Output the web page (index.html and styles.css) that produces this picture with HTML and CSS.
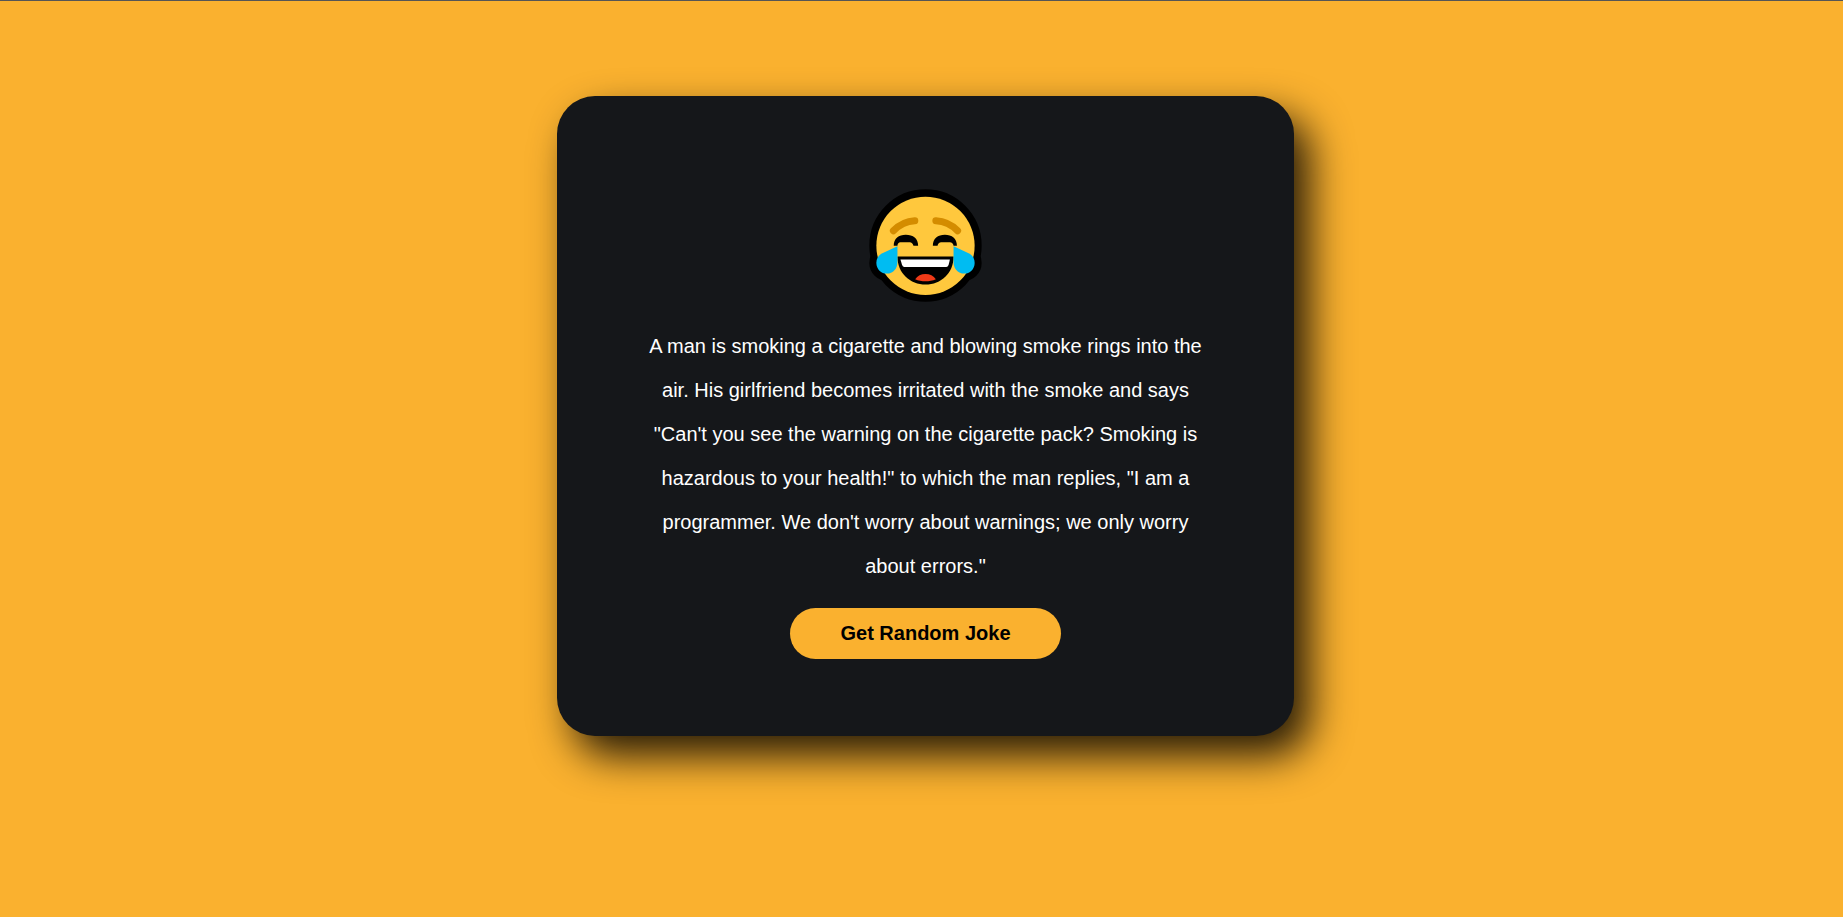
FILE: index.html
```html
<!DOCTYPE html>
<html lang="en">
<head>
<meta charset="utf-8">
<meta name="viewport" content="width=device-width, initial-scale=1">
<title>Random Joke Generator</title>
<link rel="stylesheet" href="styles.css">
</head>
<body>
<main class="card">
  <svg class="emoji" viewBox="26 28 338 338" role="img" aria-label="Face with tears of joy">
    <g fill="#000" stroke="#000" stroke-width="42" stroke-linejoin="round">
      <circle cx="195" cy="197" r="147"/>
      <path d="M111 199L66 220C54 226 48 236 48 249C48 268 63 281 79 281C98 281 111 266 111 246Z"/>
      <path d="M279 199L324 220C336 226 342 236 342 249C342 268 327 281 311 281C292 281 279 266 279 246Z"/>
    </g>
    <circle cx="195" cy="198" r="147" fill="#ffc83d"/>
    <g fill="none" stroke="#d48c00" stroke-width="21" stroke-linecap="round">
      <path d="M99 153Q126 125 163 123"/>
      <path d="M291 153Q264 125 226 123"/>
    </g>
    <path d="M100 198C100 176 115 165 136 165C158 165 173 176 173 198H159Q156 187 148 187H120Q112 187 111 198Z"/>
    <path d="M217 198C217 176 232 165 253 165C274 165 289 176 289 198H279Q277 187 268 187H242Q233 187 231 198Z"/>
    <path d="M111 230H279C279 280 241 314 195 314C149 314 111 280 111 230Z"/>
    <path d="M120 239H268L264 255Q262 261 257 261H132Q127 261 125 255Z" fill="#fff"/>
    <path d="M164 298C171 287 182 282 195 282C208 282 219 287 226 298C207 306 183 306 164 298Z" fill="#f03a17"/>
    <path d="M111 199L66 220C54 226 48 236 48 249C48 268 63 281 79 281C98 281 111 266 111 246Z" fill="#00bcf2"/>
    <path d="M279 199L324 220C336 226 342 236 342 249C342 268 327 281 311 281C292 281 279 266 279 246Z" fill="#00bcf2"/>
  </svg>
  <p class="joke">A man is smoking a cigarette and blowing smoke rings into the air. His girlfriend becomes irritated with the smoke and says "Can't you see the warning on the cigarette pack? Smoking is hazardous to your health!" to which the man replies, "I am a programmer. We don't worry about warnings; we only worry about errors."</p>
  <button class="joke-button" type="button">Get Random Joke</button>
</main>
</body>
</html>
```
FILE: styles.css
```css
* {
  box-sizing: border-box;
}

body {
  margin: 0;
  min-height: 100vh;
  padding: 95px 8px 95px 16px;
  border-top: 1px solid #555;
  background: #fab12f;
  font-family: Arial, "Liberation Sans", sans-serif;
}

.card {
  display: flex;
  flex-direction: column;
  align-items: center;
  width: 40vw;
  min-width: 320px;
  margin: 0 auto;
  padding: 93px 5% 77px;
  border-radius: 38px;
  background: #15171a;
  box-shadow: 16px 20px 40px rgba(0, 0, 0, 0.85);
}

.emoji {
  width: 113px;
  height: 113px;
}

.joke {
  margin: 22px 0 20px;
  color: #fff;
  font-size: 20px;
  line-height: 44px;
  text-align: center;
}

.joke-button {
  padding: 14px 50px;
  border: 0;
  border-radius: 26px;
  background: #fab12f;
  color: #000;
  font: bold 20px/23px Arial, "Liberation Sans", sans-serif;
  cursor: pointer;
}
```
